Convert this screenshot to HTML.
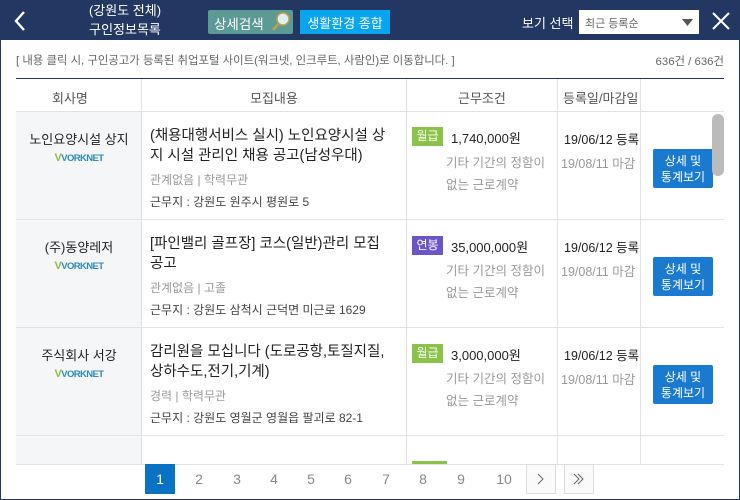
<!DOCTYPE html>
<html><head><meta charset="utf-8"><style>
*{margin:0;padding:0;box-sizing:border-box}
body{width:740px;height:500px;overflow:hidden;font-family:"Liberation Sans","Noto Sans CJK KR",sans-serif;background:#fff;position:relative;color:#222}
.frame{position:absolute;left:0;top:0;width:740px;height:500px;border:1px solid #233763;border-top:none}
.hdr{position:absolute;left:0;top:0;width:740px;height:40px;background:#233763;color:#fff}
.abs{position:absolute}
.t{position:absolute;white-space:nowrap}
.vl{position:absolute;top:79px;width:1px;height:386px;background:#e2e2e2}
.hl{position:absolute;left:16px;width:708px;height:1px;background:#e2e2e2}
.btn{position:absolute;left:653px;width:60px;height:39px;background:#1a7ad0;border-radius:2px;color:#fff;font-size:12px;text-align:center;line-height:16px;padding-top:4px}
.badge{position:absolute;left:412px;width:31px;height:19px;color:#fff;font-size:12px;text-align:center;line-height:19px}
.g{color:#999}
.pg{position:absolute;top:471px;font-size:14px;color:#888;width:20px;text-align:center}
.logo{position:absolute;left:16px;width:126px;text-align:center;font-size:9.5px;font-weight:bold;color:#2e8bb9;letter-spacing:-0.6px}
.logo span{color:#8bc34a;font-size:11px}
</style></head><body>
<div class="hdr">
<svg class="abs" style="left:13px;top:10px" width="14" height="22"><path d="M11 2L3 11l8 9" stroke="#fff" stroke-width="2.4" fill="none"/></svg>
<div class="t" style="left:70px;top:1px;width:110px;text-align:center;font-size:13px;line-height:19px">(강원도 전체)<br>구인정보목록</div>
<div class="abs" style="left:208px;top:10px;width:85px;height:24px;background:#5c9a95;border-radius:2px"></div>
<div class="t" style="left:214px;top:13px;font-size:13.5px">상세검색</div>
<svg class="abs" style="left:271px;top:11px" width="20" height="22"><circle cx="12" cy="8" r="6" fill="#dfeff8" stroke="#c8a048" stroke-width="1.5"/><path d="M7 13l-5 6" stroke="#c8a048" stroke-width="2.5"/></svg>
<div class="abs" style="left:300px;top:10px;width:90px;height:24px;background:#09a5ef"></div>
<div class="t" style="left:300px;top:13px;width:90px;text-align:center;font-size:13px">생활환경 종합</div>
<div class="t" style="left:522px;top:13px;font-size:13px">보기 선택</div>
<div class="abs" style="left:579px;top:10px;width:120px;height:24px;background:#fff"></div>
<div class="t" style="left:585px;top:15px;font-size:11px;color:#666">최근 등록순</div>
<svg class="abs" style="left:682px;top:19px" width="12" height="7"><path d="M0 0h11L5.5 7z" fill="#555"/></svg>
<svg class="abs" style="left:711px;top:11px" width="20" height="20"><path d="M2 2l16 16M18 2L2 18" stroke="#fff" stroke-width="2"/></svg>
</div>
<div class="frame"></div>
<div class="t" style="left:16px;top:52px;font-size:11.4px;color:#666">[ 내용 클릭 시, 구인공고가 등록된 취업포털 사이트(워크넷, 인크루트, 사람인)로 이동합니다. ]</div>
<div class="t" style="right:16px;top:53px;font-size:11.4px;color:#666">636건 / 636건</div>
<div class="abs" style="left:16px;top:78px;width:708px;height:1px;background:#233763"></div>
<div class="abs" style="left:16px;top:111px;width:126px;height:354px;background:#f5f6f8"></div>
<div class="vl" style="left:141px"></div><div class="vl" style="left:406px"></div><div class="vl" style="left:557px"></div><div class="vl" style="left:640px"></div>
<div class="hl" style="top:111px"></div><div class="hl" style="top:219px"></div><div class="hl" style="top:327px"></div><div class="hl" style="top:435px"></div><div class="hl" style="top:464px"></div>
<div class="t" style="left:52px;top:88px;font-size:13px;color:#555">회사명</div>
<div class="t" style="left:250px;top:88px;font-size:13px;color:#555">모집내용</div>
<div class="t" style="left:458px;top:88px;font-size:13px;color:#555">근무조건</div>
<div class="t" style="left:563px;top:88px;font-size:13px;color:#555">등록일/마감일</div>

<div class="t" style="left:16px;top:129px;width:126px;text-align:center;font-size:13px">노인요양시설 상지</div>
<div class="t" style="left:16px;top:237px;width:126px;text-align:center;font-size:13px">(주)동양레저</div>
<div class="t" style="left:16px;top:345px;width:126px;text-align:center;font-size:13px">주식회사 서강</div>
<div class="logo" style="top:152px"><span>V</span>VORKNET</div>
<div class="logo" style="top:260px"><span>V</span>VORKNET</div>
<div class="logo" style="top:368px"><span>V</span>VORKNET</div>

<div class="t" style="left:150px;top:126px;font-size:14.5px;line-height:20px">(채용대행서비스 실시) 노인요양시설 상<br>지 시설 관리인 채용 공고(남성우대)</div>
<div class="t g" style="left:150px;top:171px;font-size:12px">관계없음 | 학력무관</div>
<div class="t" style="left:150px;top:193px;font-size:12px;color:#444">근무지 : 강원도 원주시 평원로 5</div>

<div class="t" style="left:150px;top:234px;font-size:14.5px;line-height:20px">[파인밸리 골프장] 코스(일반)관리 모집<br>공고</div>
<div class="t g" style="left:150px;top:279px;font-size:12px">관계없음 | 고졸</div>
<div class="t" style="left:150px;top:301px;font-size:12px;color:#444">근무지 : 강원도 삼척시 근덕면 미근로 1629</div>

<div class="t" style="left:150px;top:342px;font-size:14.5px;line-height:20px">감리원을 모십니다 (도로공항,토질지질,<br>상하수도,전기,기계)</div>
<div class="t g" style="left:150px;top:387px;font-size:12px">경력 | 학력무관</div>
<div class="t" style="left:150px;top:409px;font-size:12px;color:#444">근무지 : 강원도 영월군 영월읍 팔괴로 82-1</div>

<div class="badge" style="top:127px;background:#8bc34a">월급</div>
<div class="t" style="left:451px;top:128px;font-size:13px">1,740,000원</div>
<div class="t g" style="left:446px;top:152px;font-size:12.5px;line-height:22px">기타 기간의 정함이<br>없는 근로계약</div>
<div class="badge" style="top:236px;background:#6c56c6">연봉</div>
<div class="t" style="left:451px;top:237px;font-size:13px">35,000,000원</div>
<div class="t g" style="left:446px;top:260px;font-size:12.5px;line-height:22px">기타 기간의 정함이<br>없는 근로계약</div>
<div class="badge" style="top:344px;background:#8bc34a">월급</div>
<div class="t" style="left:451px;top:345px;font-size:13px">3,000,000원</div>
<div class="t g" style="left:446px;top:368px;font-size:12.5px;line-height:22px">기타 기간의 정함이<br>없는 근로계약</div>
<div class="abs" style="left:412px;top:461px;width:35px;height:3px;background:#8bc34a"></div>

<div class="t" style="left:564px;top:129px;font-size:12.5px">19/06/12 등록</div>
<div class="t g" style="left:561px;top:153px;font-size:12.5px">19/08/11 마감</div>
<div class="t" style="left:564px;top:237px;font-size:12.5px">19/06/12 등록</div>
<div class="t g" style="left:561px;top:261px;font-size:12.5px">19/08/11 마감</div>
<div class="t" style="left:564px;top:345px;font-size:12.5px">19/06/12 등록</div>
<div class="t g" style="left:561px;top:369px;font-size:12.5px">19/08/11 마감</div>

<div class="btn" style="top:149px">상세 및<br>통계보기</div>
<div class="btn" style="top:257px">상세 및<br>통계보기</div>
<div class="btn" style="top:365px">상세 및<br>통계보기</div>
<div class="abs" style="left:712px;top:114px;width:12px;height:62px;background:#bbb;border-radius:6px"></div>

<div class="abs" style="left:145px;top:464px;width:30px;height:30px;background:#0a72c2"></div>
<div class="pg" style="left:150px;color:#fff">1</div>
<div class="pg" style="left:189px">2</div><div class="pg" style="left:227px">3</div><div class="pg" style="left:264px">4</div><div class="pg" style="left:301px">5</div><div class="pg" style="left:338px">6</div><div class="pg" style="left:376px">7</div><div class="pg" style="left:413px">8</div><div class="pg" style="left:451px">9</div><div class="pg" style="left:494px">10</div>
<div class="abs" style="left:526px;top:464px;width:30px;height:30px;border:1px solid #ddd;background:#fafafa"></div>
<div class="abs" style="left:564px;top:464px;width:30px;height:30px;border:1px solid #ddd;background:#fafafa"></div>
<svg class="abs" style="left:526px;top:464px" width="70" height="30"><path d="M12 10l5 5-5 5" stroke="#666" fill="none"/><path d="M48 10l5 5-5 5M52 10l5 5-5 5" stroke="#666" fill="none"/></svg>
</body></html>
